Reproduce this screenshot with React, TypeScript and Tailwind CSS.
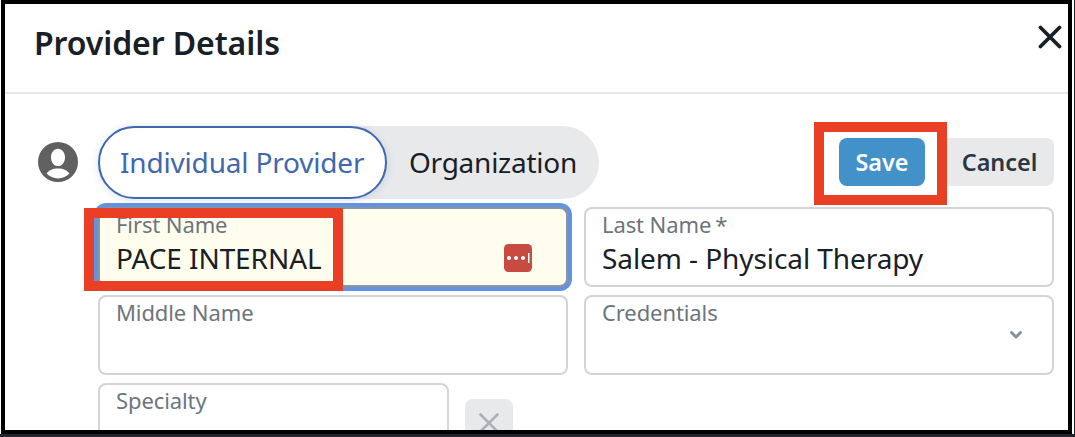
import type { ReactNode } from "react";

function Field({ label, value, className = "", children }: { label: ReactNode; value?: string; className?: string; children?: ReactNode }) {
  return (
    <div className={`relative h-20 rounded-[8px] border-2 px-4 ${className}`}>
      <div className="h-[30px] text-[22px] leading-[30px] tracking-[-0.1px] whitespace-nowrap text-[#6c757d]">{label}</div>
      <div className="h-[38px] text-[28px] leading-[38px] tracking-[-0.08px] whitespace-nowrap text-[#182026]">{value}</div>
      {children}
    </div>
  );
}

export default function App() {
  return (
    <div className="flex h-[437px] w-[1075px] flex-col overflow-hidden bg-[#22252a] pr-px font-['Noto_Sans',sans-serif]">
      <div className="h-[434px] shrink-0 bg-white pr-0.5 pl-px">
        <div className="h-[434px] overflow-hidden border-4 border-black bg-white">
          <header className="flex h-[90px] justify-between border-b-2 border-[#e5e7e8] pr-[6px] pl-[29px]">
            <h1 className="mt-[17px] text-[32px] leading-[44px] font-semibold tracking-[-0.09px] whitespace-nowrap text-[#182026]">Provider Details</h1>
            <svg className="mt-[21px] h-6 w-6" viewBox="0 0 24 24" fill="none" stroke="#182026" strokeWidth="3.8" strokeLinecap="round">
              <path d="M2.5 2.5 21.5 21.5M21.5 2.5 2.5 21.5" />
            </svg>
          </header>

          <div className="flex pt-8 pl-[33px]">
            <svg className="mt-4 mr-5 h-10 w-10 shrink-0" viewBox="2 2 20 20" fill="#606060">
              <path fillRule="evenodd" d="M12 2a10 10 0 1 0 0 20 10 10 0 0 0 0-20ZM12 5.4c2 0 3.5 1.9 3.5 4.3S14 14 12 14s-3.5-1.9-3.5-4.3S10 5.4 12 5.4ZM12 20.2c-2.3 0-4.3-.9-5.7-2.4 1-1.5 3-2.5 5.7-2.5s4.7 1 5.7 2.5c-1.4 1.5-3.4 2.4-5.7 2.4Z" />
            </svg>

            <main className="w-[956px] shrink-0">
              <div className="flex h-[73px] items-start justify-between">
                <div className="flex h-[73px] w-[501px] rounded-full bg-[#e8e9eb] text-[28px] leading-[69px] tracking-[-0.18px] whitespace-nowrap">
                  <div className="w-[289px] rounded-full border-2 border-[#4068ad] bg-white pl-5 text-[#4068ad] shadow-[0_1px_8px_rgba(64,104,173,0.2)]">Individual Provider</div>
                  <div className="pt-0.5 pl-[22px] tracking-[-0.25px] text-[#182026]">Organization</div>
                </div>
                <div className="flex gap-4 pt-3 text-[23.4px] leading-[48px] font-semibold whitespace-nowrap">
                  <button className="relative h-12 w-[86px] rounded-[8px] bg-[#4292c9] text-white">
                    Save
                    <span className="absolute -top-4 -left-[25px] z-10 h-[83px] w-[133px] border-10 border-[#e83f25]" />
                  </button>
                  <button className="h-12 w-[113px] rounded-[8px] bg-[#e8e9eb] pl-1 text-[#293742]">Cancel</button>
                </div>
              </div>

              <div className="mt-2 grid grid-cols-2 gap-x-4 gap-y-2">
                <Field label="First Name" value="PACE INTERNAL" className="border-[#8d959b] bg-[#fffdee] ring-4 ring-[#6293e2]">
                  <svg className="absolute top-[35px] right-[34px] h-7 w-7" viewBox="0 0 28 28">
                    <rect width="28" height="28" rx="4.5" fill="#c84b41" />
                    <g fill="#fff">
                      <circle cx="5" cy="14" r="2" />
                      <circle cx="12" cy="14" r="2" />
                      <circle cx="19" cy="14" r="2" />
                      <rect x="24" y="9" width="1.5" height="10" />
                    </g>
                  </svg>
                  <span className="absolute -top-[1px] -left-4 h-[83px] w-[259px] border-10 border-[#e83f25]" />
                </Field>
                <Field label={<>Last Name<span className="ml-[4px]">*</span></>} value="Salem - Physical Therapy" className="border-[#d2d4d8]" />
                <Field label="Middle Name" className="border-[#d2d4d8]" />
                <Field label="Credentials" className="border-[#d2d4d8]">
                  <svg className="absolute top-[33px] right-[29px] h-[10px] w-[14px]" viewBox="0 0 14 10" fill="none" stroke="#8a9299" strokeWidth="3" strokeLinecap="round" strokeLinejoin="round">
                    <path d="M2.5 2.5 7 7 11.5 2.5" />
                  </svg>
                </Field>
              </div>

              <div className="mt-2 flex gap-4">
                <Field label="Specialty" className="w-[351px] border-[#d2d4d8]" />
                <button className="mt-4 flex h-12 w-12 items-center justify-center rounded-[8px] bg-[#e8e9eb]">
                  <svg className="h-5 w-5" viewBox="0 0 20 20" fill="none" stroke="#a9b0b7" strokeWidth="2.6" strokeLinecap="round">
                    <path d="M1.5 1.5 18.5 18.5M18.5 1.5 1.5 18.5" />
                  </svg>
                </button>
              </div>
            </main>
          </div>
        </div>
      </div>
    </div>
  );
}
